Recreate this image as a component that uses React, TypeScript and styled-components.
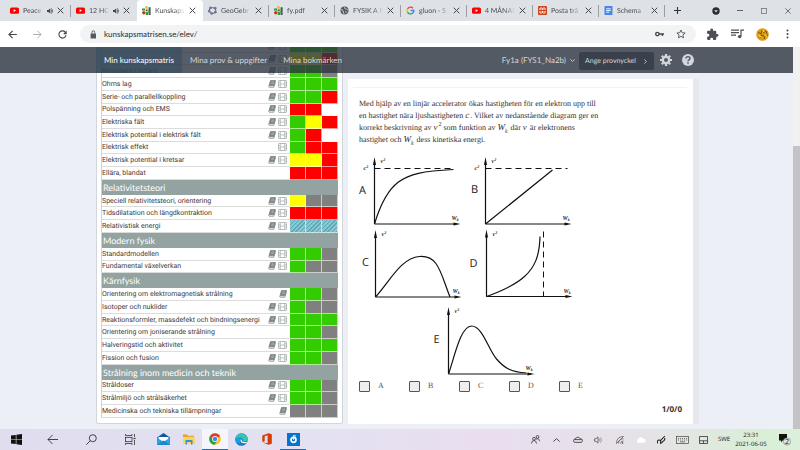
import React from "react";
import styled, { createGlobalStyle, css } from "styled-components";

const Global = createGlobalStyle`
  * { box-sizing: border-box; }
  html, body { margin: 0; height: 100%; }
  body {
    font-family: "Open Sans", "Noto Sans", sans-serif;
    text-rendering: geometricPrecision;
    overflow: hidden;
  }
  button { font: inherit; color: inherit; border: 0; background: none; padding: 0; margin: 0; text-rendering: inherit; }
  input { text-rendering: inherit; }
  svg { display: block; flex: none; }
`;

const Screen = styled.div`
  display: flex;
  flex-direction: column;
  height: 100vh;
  background: #ecf0f6;
`;

/* Browser chrome */

const TabStrip = styled.div`
  display: flex;
  align-items: center;
  height: 21px;
  flex: none;
  padding-left: 5px;
  background: #dee1e6;
`;

const Tab = styled.div<{ $active?: boolean }>`
  display: flex;
  align-items: center;
  gap: 4px;
  flex: 0 1 66px;
  min-width: 0;
  height: 21px;
  padding: 0 7px 0 5px;
  font-family: Lato, sans-serif;
  font-size: 7px;
  line-height: 12px;
  color: #4a4e53;
  border-radius: 4px 4px 0 0;
  background: ${(p) => (p.$active ? "#fff" : "transparent")};
`;

const TabTitle = styled.span`
  flex: 1;
  min-width: 0;
  overflow: hidden;
  white-space: nowrap;
  mask-image: linear-gradient(90deg, #000 65%, transparent 100%);
`;

const TabDivider = styled.span`
  width: 1px;
  height: 12px;
  margin-left: -1px;
  background: #9a9da2;
`;

const NewTab = styled.button`
  width: 24px;
  display: grid;
  place-items: center;
`;

const WindowControls = styled.div`
  display: flex;
  align-items: center;
  margin-left: auto;
`;

const WindowButton = styled.button`
  width: 24px;
  height: 18px;
  display: grid;
  place-items: center;
`;

const Toolbar = styled.div`
  display: flex;
  align-items: center;
  height: 26px;
  flex: none;
  background: #fff;
`;

const ToolButton = styled.button`
  width: 25px;
  height: 20px;
  display: grid;
  place-items: center;
`;

const Omnibox = styled.div`
  display: flex;
  align-items: center;
  gap: 6px;
  flex: 1;
  height: 18px;
  margin: 0 4px 0 5px;
  padding: 0 7px 0 10px;
  border-radius: 9px;
  background: #f1f3f4;
`;

const Address = styled.input`
  flex: 1;
  min-width: 0;
  border: 0;
  padding: 0 0 0 1px;
  background: none;
  font: 8px/14px Lato, sans-serif;
  color: #2c3034;
`;

const OmniButton = styled.button`
  width: 16px;
  display: grid;
  place-items: center;
`;

/* Site */

const Viewport = styled.div`
  position: relative;
  display: flex;
  flex: 1;
  min-height: 0;
  overflow: hidden;
`;

const Page = styled.main`
  display: flex;
  align-items: flex-end;
  gap: 5px;
  flex: 1;
  min-width: 0;
  padding: 0 94px 5px 96px;
`;

const ScrollTrack = styled.div`
  display: flex;
  flex-direction: column;
  justify-content: flex-end;
  width: 7px;
  background: #f1f1f1;
`;

const ScrollThumb = styled.div`
  height: 74%;
  background: #c4c4c6;
`;

const SiteHeader = styled.header`
  position: absolute;
  top: 0;
  left: 0;
  right: 7px;
  display: flex;
  align-items: center;
  height: 26px;
  padding: 0 99px 0 96px;
  background: rgba(45, 53, 64, 0.8);
  color: #d3d6da;
  font-family: Lato, sans-serif;
  font-size: 8px;
  line-height: 12px;
  white-space: nowrap;
`;

const NavLink = styled.a<{ $active?: boolean }>`
  display: flex;
  align-items: center;
  height: 26px;
  padding: 0 8px;
  color: ${(p) => (p.$active ? "#fff" : "#d3d6da")};
  background: ${(p) => (p.$active ? "rgba(52, 78, 98, 0.6)" : "none")};
  text-decoration: none;
`;

const CourseButton = styled.button`
  display: flex;
  align-items: center;
  gap: 4px;
  margin-left: auto;
`;

const KeyButton = styled.button`
  display: flex;
  align-items: center;
  justify-content: space-between;
  width: 75px;
  height: 18px;
  margin: 2px 6px 0 4px;
  padding: 0 7px 0 6px;
  border-radius: 2px;
  background: #3a414d;
  font-size: 7px;
`;

const IconButton = styled.button`
  width: 12px;
  margin-right: 10px;
  &:last-child { margin-right: 0; }
`;

/* Knowledge matrix */

const MatrixPanel = styled.section`
  width: 247px;
  flex: none;
  padding: 0 4px 5px;
  background: #fff;
  border: 1px solid #d2d5d9;
  border-radius: 0 0 2px 2px;
`;

const Matrix = styled.table`
  width: 100%;
  height: 378px;
  border-collapse: separate;
  border-spacing: 0;
  border-left: 1px solid #cfd2d4;
  table-layout: fixed;
  font-family: Roboto, sans-serif;
  font-size: 7px;
  line-height: 10px;
  color: #3c3c3c;
`;

const NameCol = styled.col``;
const IconCol = styled.col`width: 23px;`;
const LevelCol = styled.col`width: 16px;`;

const Topic = styled.th`
  height: 11px;
  padding: 0;
  border-bottom: 1px solid #dcdcdc;
  font-weight: 400;
  text-align: left;
  white-space: nowrap;
`;

const IconCell = styled.td`
  padding: 0 3px 0 0;
  border-bottom: 1px solid #dcdcdc;
`;

const IconPair = styled.div`
  display: flex;
  justify-content: flex-end;
  gap: 2px;
`;

const levelColors: Record<string, string> = {
  g: "#33cc00",
  y: "#ffff00",
  r: "#ff0000",
  x: "#808080",
  w: "#ffffff",
};

const Level = styled.td<{ $level: string }>`
  padding: 0;
  border-right: 1px solid rgba(255, 255, 255, 0.6);
  border-bottom: 1px solid rgba(255, 255, 255, 0.6);
  ${(p) =>
    p.$level === "h"
      ? css`background: repeating-linear-gradient(135deg, #55a9b8 0 1px, #8cc5cf 1px 3px);`
      : css`background: ${levelColors[p.$level]};`}
`;

const SectionHead = styled.th`
  height: 13px;
  padding: 0 1px;
  background: #92a3a1;
  color: #fff;
  font-family: Lato, sans-serif;
  font-size: 9px;
  line-height: 13px;
  font-weight: 400;
  text-align: left;
`;

/* Question */

const QuestionPanel = styled.section`
  flex: 1;
  min-width: 0;
  align-self: stretch;
  display: flex;
  flex-direction: column;
  margin-top: 32px;
  padding: 8px 6px 0 5px;
  border-right: 6px solid #e6e8eb;
  background: #fff;
`;

const Rule = styled.hr`
  width: 100%;
  height: 1px;
  margin: 0;
  border: 0;
  background: #f2f2f2;
`;

const QuestionText = styled.p`
  margin: 10px 0 0;
  padding: 0 6px;
  font: 8px/12px "Liberation Serif", serif;
  color: #333;
  white-space: nowrap;
  i { margin-right: 1px; font-size: 9px; line-height: 0; }
  sup, sub { font-size: 6px; line-height: 0; }
`;

const Diagrams = styled.svg`
  margin: 8px 0 0 2px;
`;

const Options = styled.fieldset`
  display: flex;
  margin: 0;
  padding: 2px 6px 0;
  border: 0;
`;

const Option = styled.label`
  display: flex;
  align-items: center;
  gap: 8px;
  width: 50px;
  font: 8px/12px "Liberation Serif", serif;
  color: #555;
`;

const Check = styled.input`
  appearance: none;
  width: 11px;
  height: 11px;
  margin: 0;
  border: 1px solid #555;
  border-radius: 1px;
  background: #eee;
`;

const Score = styled.div`
  margin: auto 5px 8px auto;
  font-size: 8px;
  line-height: 12px;
  font-weight: 700;
  color: #333;
`;

/* Taskbar */

const Taskbar = styled.footer`
  display: flex;
  height: 21px;
  flex: none;
  background: linear-gradient(90deg, #e0ddee 0%, #e4e1f2 40%, #e9deef 62%, #e5e3e6 82%, #d9efd6 96%, #dcefdb 100%);
`;

const StartGroup = styled.div`
  display: flex;
  width: 150px;
`;

const SystemButton = styled.button`
  flex: 1;
  display: grid;
  place-items: center;
  &:first-child { flex: none; width: 33px; }
`;

const AppButton = styled.button<{ $running?: boolean; $focused?: boolean }>`
  width: 26px;
  display: grid;
  place-items: center;
  border-bottom: 1px solid ${(p) => (p.$running ? "#0f72c4" : "transparent")};
  background: ${(p) => (p.$focused ? "#f6f5fb" : "none")};
`;

const Tray = styled.div`
  display: flex;
  align-items: center;
  margin-left: auto;
  font-size: 6px;
  line-height: 9px;
  color: #111;
`;

const TrayButton = styled.button`
  width: 21px;
  height: 21px;
  display: grid;
  place-items: center;
`;

const Language = styled.button`
  width: 20px;
`;

const Clock = styled.div`
  width: 34px;
  text-align: center;
  white-space: nowrap;
`;

const Notifications = styled.button`
  width: 32px;
  display: grid;
  place-items: center;
`;

/* Icons */

type GlyphProps = { w: number; h?: number; box?: string; children: React.ReactNode };

const Glyph = ({ w, h = w, box = "0 0 24 24", children }: GlyphProps) => (
  <svg width={w} height={h} viewBox={box} fill="none" stroke="currentColor" strokeWidth="2" aria-hidden="true">
    {children}
  </svg>
);

const Close = () => (
  <Glyph w={7} box="0 0 7 7">
    <path d="M.7.7l5.6 5.6M6.3.7L.7 6.3" stroke="#44474b" strokeWidth="1" />
  </Glyph>
);

const Favicon = ({ kind }: { kind: string }) => {
  switch (kind) {
    case "youtube":
      return (
        <Glyph w={9} box="0 0 9 9">
          <rect y="1.4" width="9" height="6.4" rx="1.6" fill="#f00" stroke="none" />
          <path d="M3.6 3.2v2.8L6 4.6z" fill="#fff" stroke="none" />
        </Glyph>
      );
    case "matrix":
      return (
        <Glyph w={9} box="0 0 9 9">
          <g stroke="none">
            <circle cx="1.8" cy="6.8" r="1.7" fill="#e02b20" />
            <path d="M3.3.3h2.4v2.4H3.3z" fill="#e8b900" />
            <path d="M0 2.5h3v2H0zM3.8 6h2.2v3H3.8z" fill="#2c9b30" />
            <path d="M6.6 1.3h2V9h-2zM3.7 3.6h2v1.7h-2z" fill="#4b5055" />
            <path d="M6.4 4.2h1v3h-1z" fill="#2fb52f" />
          </g>
        </Glyph>
      );
    case "geogebra":
      return (
        <Glyph w={9} box="0 0 9 9">
          <ellipse cx="4.5" cy="4.5" rx="3.3" ry="2.9" stroke="#666" strokeWidth="1" />
          <g fill="#7777c8" stroke="#445" strokeWidth=".3">
            <circle cx="2.5" cy="1.8" r="1.1" /><circle cx="7.3" cy="2.2" r="1.1" />
            <circle cx="1.2" cy="5.2" r="1.1" /><circle cx="3.7" cy="7.5" r="1.1" /><circle cx="7.4" cy="6.2" r="1.1" />
          </g>
        </Glyph>
      );
    case "globe":
      return (
        <Glyph w={9} box="0 0 9 9">
          <circle cx="4.5" cy="4.5" r="4" fill="#55595e" stroke="none" />
          <path d="M1 3.5c1.6.4 2.6 1.3 2.2 2.3L4 7.8M4.6 1.2c-.6 1 .4 1.6 1.2 1.5s.7 1.3 2 1.2M5.2 5.7l1.6.6" stroke="#dee1e6" strokeWidth=".9" />
        </Glyph>
      );
    case "google":
      return (
        <Glyph w={9} box="0 0 9 9">
          <g strokeWidth="1.4">
            <path d="M7 2.2A3.4 3.4 0 0 0 1.5 2.9" stroke="#ea4335" />
            <path d="M1.5 2.9a3.4 3.4 0 0 0 0 3.2" stroke="#fbbc05" />
            <path d="M1.5 6.1A3.4 3.4 0 0 0 6.8 7" stroke="#34a853" />
            <path d="M6.8 7a3.4 3.4 0 0 0 1.1-2.5H4.6" stroke="#4285f4" />
          </g>
        </Glyph>
      );
    case "fandom":
      return (
        <Glyph w={9} box="0 0 9 9">
          <rect width="9" height="9" rx="1" fill="#cf4520" stroke="none" />
          <path d="M1 3h2.8M5.2 3H8M1 6h2.8M5.2 6H8M4.5 2.2v1.6M4.5 5.2v1.6M3 1.2v1M6 1.2v1M3 6.8v1M6 6.8v1" stroke="#fff" strokeWidth="1" />
        </Glyph>
      );
    default:
      return (
        <Glyph w={9} box="0 0 9 9">
          <rect x=".5" width="8" height="9" rx=".8" fill="#4285f4" stroke="none" />
          <path d="M2.2 2.8h4.6M2.2 4.5h4.6M2.2 6.2h3" stroke="#fff" strokeWidth=".9" />
        </Glyph>
      );
  }
};

const SpeakerSmall = () => (
  <Glyph w={6} box="0 0 6 6">
    <path d="M0 2h1.3L3.2.4v5.2L1.3 4H0z" fill="#44474b" stroke="none" />
    <path d="M4 1.6q1.2 1.4 0 2.8M4.4.3q2.6 2.7 0 5.4" stroke="#44474b" strokeWidth=".7" />
  </Glyph>
);

const Book = () => (
  <Glyph w={8} box="0 0 8 8">
    <path d="M2.5.5h5L6 5.8H1z" fill="#7b8684" stroke="#7b8684" strokeWidth=".8" strokeLinejoin="round" />
    <path d="M1 5.8q-.8 1.4.3 1.5h4.5L7.4 1.8" stroke="#7b8684" strokeWidth=".7" />
    <path d="M3.5 2h2.6M3.1 3.3h2.6" stroke="#d6dcda" strokeWidth=".5" />
  </Glyph>
);

const Film = () => (
  <Glyph w={9} h={8} box="0 0 9 8">
    <rect x=".5" y=".5" width="8" height="7" rx=".6" stroke="#a3abaa" strokeWidth=".8" />
    <path d="M2.3.5v7M6.7.5v7M.5 2.8h1.8M.5 5.2h1.8M6.7 2.8h1.8M6.7 5.2h1.8M2.3 4h4.4" stroke="#a3abaa" strokeWidth=".7" />
  </Glyph>
);

/* Data */

type TabInfo = { icon: string; title: string; sound?: boolean; active?: boolean; plain?: boolean };

const tabs: TabInfo[] = [
  { icon: "youtube", title: "Peace", sound: true },
  { icon: "youtube", title: "12 HO", sound: true, plain: true },
  { icon: "matrix", title: "Kunskaps", active: true, plain: true },
  { icon: "geogebra", title: "GeoGebr" },
  { icon: "matrix", title: "fy.pdf" },
  { icon: "globe", title: "FYSIK A F" },
  { icon: "google", title: "gluon - S" },
  { icon: "youtube", title: "4 MÅNAD" },
  { icon: "fandom", title: "Posta trå" },
  { icon: "docs", title: "Schema" },
];

type Row = { name: string; icons: string; levels: string };
type Section = { title?: string; rows: Row[] };

const sections: Section[] = [
  {
    rows: [
      { name: "", icons: "bf", levels: "ggg" },
      { name: "", icons: "bf", levels: "yyr" },
      { name: "Resistans i ledare", icons: "bf", levels: "ggx" },
      { name: "Ohms lag", icons: "bf", levels: "ggg" },
      { name: "Serie- och parallellkoppling", icons: "bf", levels: "ggr" },
      { name: "Polspänning och EMS", icons: "bf", levels: "rrw" },
      { name: "Elektriska fält", icons: "bf", levels: "gyr" },
      { name: "Elektrisk potential i elektrisk fält", icons: "bf", levels: "grw" },
      { name: "Elektrisk effekt", icons: "f", levels: "grr" },
      { name: "Elektrisk potential i kretsar", icons: "bf", levels: "yyr" },
      { name: "Ellära, blandat", icons: "", levels: "rrr" },
    ],
  },
  {
    title: "Relativitetsteori",
    rows: [
      { name: "Speciell relativitetsteori, orientering", icons: "bf", levels: "yxx" },
      { name: "Tidsdilatation och längdkontraktion", icons: "bf", levels: "rrr" },
      { name: "Relativistisk energi", icons: "bf", levels: "hhh" },
    ],
  },
  {
    title: "Modern fysik",
    rows: [
      { name: "Standardmodellen", icons: "bf", levels: "ggx" },
      { name: "Fundamental växelverkan", icons: "bf", levels: "gxx" },
    ],
  },
  {
    title: "Kärnfysik",
    rows: [
      { name: "Orientering om elektromagnetisk strålning", icons: "b", levels: "ggx" },
      { name: "Isotoper och nuklider", icons: "bf", levels: "gxx" },
      { name: "Reaktionsformler, massdefekt och bindningsenergi", icons: "bf", levels: "ggg" },
      { name: "Orientering om joniserande strålning", icons: "", levels: "ggx" },
      { name: "Halveringstid och aktivitet", icons: "bf", levels: "ggg" },
      { name: "Fission och fusion", icons: "bf", levels: "ggx" },
    ],
  },
  {
    title: "Strålning inom medicin och teknik",
    rows: [
      { name: "Stråldoser", icons: "bf", levels: "ggx" },
      { name: "Strålmiljö och strålsäkerhet", icons: "bf", levels: "ggx" },
      { name: "Medicinska och tekniska tillämpningar", icons: "b", levels: "xxx" },
    ],
  },
];

/* Diagrams: each plot is drawn around its own origin. */

type PlotProps = { x: number; y: number; letter: string; lx: number; ly: number; limit?: boolean; children: React.ReactNode };

const Plot = ({ x, y, letter, lx, ly, limit, children }: PlotProps) => (
  <g transform={`translate(${x} ${y})`}>
    <path d="M0 0V-62M0 0H82" strokeWidth="1.2" />
    <path d="M0-67l1.5 8h-3zM86 0l-7 1.5v-3z" fill="#111" stroke="none" />
    <g fill="#222" stroke="none" fontFamily="Liberation Serif" fontStyle="italic" fontWeight="700">
      <text x="6" y="-61" fontSize="6">v<tspan dy="-2" fontSize="4">2</tspan></text>
      <text x="77" y="-4" fontSize="6">W<tspan dy="1" fontSize="4">k</tspan></text>
      {limit && <text x="-11" y="-54" fontSize="6">c<tspan dy="-2" fontSize="4">2</tspan></text>}
    </g>
    <text x={lx} y={ly} fill="#222" stroke="none" fontFamily="Open Sans" fontSize="11" textAnchor="middle">{letter}</text>
    {children}
  </g>
);

export default function App() {
  return (
    <Screen>
      <Global />
      <TabStrip>
        {tabs.map((t, i) => (
          <React.Fragment key={i}>
            <Tab $active={t.active}>
              <Favicon kind={t.icon} />
              <TabTitle>{t.title}</TabTitle>
              {t.sound && <SpeakerSmall />}
              <button aria-label="Stäng flik"><Close /></button>
            </Tab>
            {!t.plain && <TabDivider />}
          </React.Fragment>
        ))}
        <NewTab aria-label="Ny flik">
          <Glyph w={7} box="0 0 7 7"><path d="M3.5 0v7M0 3.5h7" stroke="#333" strokeWidth="1.1" /></Glyph>
        </NewTab>
        <WindowControls>
          <WindowButton aria-label="Sök flikar">
            <Glyph w={8} box="0 0 8 8"><circle cx="4" cy="4" r="3.7" fill="#2b2d30" stroke="none" /><path d="M2.2 3.2h3.6L4 5.5z" fill="#dee1e6" stroke="none" /></Glyph>
          </WindowButton>
          <WindowButton aria-label="Minimera"><Glyph w={6} box="0 0 6 6"><path d="M0 2.5h6" stroke="#555" strokeWidth=".9" /></Glyph></WindowButton>
          <WindowButton aria-label="Maximera"><Glyph w={6} box="0 0 6 6"><rect x=".5" y=".5" width="5" height="5" stroke="#666" strokeWidth=".7" /></Glyph></WindowButton>
          <WindowButton aria-label="Stäng"><Glyph w={6} box="0 0 6 6"><path d="M.4.4l5.2 5.2M5.6.4L.4 5.6" stroke="#555" strokeWidth=".8" /></Glyph></WindowButton>
        </WindowControls>
      </TabStrip>

      <Toolbar>
        <ToolButton aria-label="Bakåt"><Glyph w={9} box="0 0 9 9"><path d="M8.8 4.5H1M4.6.8L.9 4.5l3.7 3.7" stroke="#44474b" strokeWidth="1.1" /></Glyph></ToolButton>
        <ToolButton aria-label="Framåt"><Glyph w={9} box="0 0 9 9"><path d="M.2 4.5H8M4.4.8l3.7 3.7-3.7 3.7" stroke="#a8abb0" strokeWidth="1" /></Glyph></ToolButton>
        <ToolButton aria-label="Ladda om"><Glyph w={9} box="0 0 9 9"><path d="M7.6 2.6A3.6 3.6 0 1 0 8 5.4" stroke="#44474b" strokeWidth="1.1" /><path d="M8.7.6v3.6H5.1z" fill="#44474b" stroke="none" /></Glyph></ToolButton>
        <Omnibox>
          <Glyph w={7} h={9} box="0 0 7 9"><rect x=".6" y="3.4" width="5.4" height="5" rx=".5" fill="#55595e" stroke="none" /><path d="M1.9 3.6V2.2a1.4 1.4 0 0 1 2.8 0v1.4" stroke="#55595e" strokeWidth=".9" /></Glyph>
          <Address aria-label="Adress" defaultValue="kunskapsmatrisen.se/elev/" />
          <OmniButton aria-label="Lösenord"><Glyph w={9} h={6} box="0 0 9 6"><circle cx="2.4" cy="3" r="1.7" stroke="#44474b" strokeWidth="1.3" /><path d="M4 3h5M7.4 3v2" stroke="#44474b" strokeWidth="1.3" /></Glyph></OmniButton>
          <OmniButton aria-label="Bokmärke"><Glyph w={10}><path d="M12 2.5l2.9 6.4 7 .7-5.3 4.7 1.5 6.9L12 17.6 5.9 21.2l1.5-6.9L2.1 9.6l7-.7z" stroke="#44474b" /></Glyph></OmniButton>
        </Omnibox>
        <ToolButton aria-label="Tillägg">
          <Glyph w={13}><path d="M20.5 11H19V7a2 2 0 0 0-2-2h-4V3.5a2.5 2.5 0 0 0-5 0V5H4a2 2 0 0 0-2 2v3.8h1.5a2.7 2.7 0 0 1 0 5.4H2V20a2 2 0 0 0 2 2h3.8v-1.5a2.7 2.7 0 0 1 5.4 0V22H17a2 2 0 0 0 2-2v-4h1.5a2.5 2.5 0 0 0 0-5z" fill="#4c4f53" stroke="none" /></Glyph>
        </ToolButton>
        <ToolButton aria-label="Media">
          <Glyph w={13} h={10} box="0 0 13 10"><path d="M0 1.2h8M0 3.7h8M0 6.2h5M10 7.5V1.2h3" stroke="#4c4f53" strokeWidth="1.2" /><circle cx="8.6" cy="7.6" r="1.7" fill="#4c4f53" stroke="none" /></Glyph>
        </ToolButton>
        <ToolButton aria-label="Profil">
          <Glyph w={13} box="0 0 13 13">
            <circle cx="6.5" cy="6.5" r="6.3" fill="#dc9d18" stroke="none" />
            <path d="M2 4l3 2 1-4M4 10l1-3 3 1M7 5l3-2 1 3M8 11l1-3 3-1" stroke="#7d5208" strokeWidth="1" />
            <path d="M3 7l2 2M7 2l1 2M9 7l2 2" stroke="#f6d43c" strokeWidth="1.3" />
          </Glyph>
        </ToolButton>
        <ToolButton aria-label="Meny">
          <Glyph w={3} h={10} box="0 0 3 10"><g fill="#44474b" stroke="none"><circle cx="1.5" cy="1.5" r="1" /><circle cx="1.5" cy="5" r="1" /><circle cx="1.5" cy="8.5" r="1" /></g></Glyph>
        </ToolButton>
      </Toolbar>

      <Viewport>
        <Page>
          <MatrixPanel>
            <Matrix>
              <colgroup><NameCol /><IconCol /><LevelCol /><LevelCol /><LevelCol /></colgroup>
              <tbody>
                {sections.map((s, si) => (
                  <React.Fragment key={si}>
                    {s.title && <tr><SectionHead colSpan={5}>{s.title}</SectionHead></tr>}
                    {s.rows.map((r, ri) => (
                      <tr key={ri}>
                        <Topic scope="row">{r.name}</Topic>
                        <IconCell><IconPair>{r.icons.includes("b") && <Book />}{r.icons.includes("f") && <Film />}</IconPair></IconCell>
                        {r.levels.split("").map((l, li) => <Level key={li} $level={l} />)}
                      </tr>
                    ))}
                  </React.Fragment>
                ))}
              </tbody>
            </Matrix>
          </MatrixPanel>

          <QuestionPanel>
            <Rule />
            <QuestionText>
              Med hjälp av en linjär accelerator ökas hastigheten för en elektron upp till<br />
              en hastighet nära ljushastigheten <i>c</i>. Vilket av nedanstående diagram ger en<br />
              korrekt beskrivning av <i>v</i><sup>2</sup> som funktion av <i>W<sub>k</sub></i> där <i>v</i> är elektronens<br />
              hastighet och <i>W<sub>k</sub></i> dess kinetiska energi.
            </QuestionText>
            <Diagrams width="222" height="224" viewBox="355 154 222 224" fill="none" stroke="#111" role="img" aria-label="Diagram A till E">
              <Plot x={374.5} y={224} letter="A" lx={-12} ly={-30} limit>
                <path d="M0-55.5H79" strokeDasharray="6 4" />
                <path d="M0 0C6-20 13-34 24-42S48-53 79-54.5" strokeWidth="1.2" />
              </Plot>
              <Plot x={485.5} y={224} letter="B" lx={-11} ly={-31} limit>
                <path d="M0-55.5H82" strokeDasharray="6 4" />
                <path d="M0 0L67-54" strokeWidth="1.2" />
              </Plot>
              <Plot x={375.5} y={297} letter="C" lx={-10} ly={-31}>
                <path d="M0 0C14-15 25-39 44-40.5S65-24 74.5 0" strokeWidth="1.2" />
              </Plot>
              <Plot x={486.5} y={296.5} letter="D" lx={-13} ly={-30}>
                <path d="M57-65V0" strokeDasharray="6 4" />
                <path d="M0 0C14-5 28-11 38-20S53-40 53.5-60" strokeWidth="1.2" />
              </Plot>
              <Plot x={448.5} y={374} letter="E" lx={-12} ly={-31}>
                <path d="M0 0C6-17 12-48 23-48S40-24 48-15 62-2 78-1" strokeWidth="1.2" />
              </Plot>
            </Diagrams>
            <Options aria-label="Svarsalternativ">
              {["A", "B", "C", "D", "E"].map((o) => (
                <Option key={o}><Check type="checkbox" />{o}</Option>
              ))}
            </Options>
            <Score>1/0/0</Score>
          </QuestionPanel>
        </Page>
        <ScrollTrack><ScrollThumb /></ScrollTrack>

        <SiteHeader>
          <NavLink href="#matris" $active>Min kunskapsmatris</NavLink>
          <NavLink href="#prov">Mina prov &amp; uppgifter</NavLink>
          <NavLink href="#bokmarken">Mina bokmärken</NavLink>
          <CourseButton>Fy1a (FYS1_Na2b)<Glyph w={5} h={3} box="0 0 5 3"><path d="M.4.4l2.1 2 2.1-2" strokeWidth=".9" /></Glyph></CourseButton>
          <KeyButton>Ange provnyckel<Glyph w={3} h={5} box="0 0 3 5"><path d="M.4.4l2 2.1-2 2.1" strokeWidth=".8" /></Glyph></KeyButton>
          <IconButton aria-label="Inställningar">
            <Glyph w={12} box="0 0 12 12"><circle cx="6" cy="6" r="3.2" strokeWidth="2.4" /><path d="M6 0v2M6 10v2M0 6h2M10 6h2M1.8 1.8l1.4 1.4M8.8 8.8l1.4 1.4M1.8 10.2l1.4-1.4M8.8 3.2l1.4-1.4" strokeWidth="2.2" /></Glyph>
          </IconButton>
          <IconButton aria-label="Hjälp">
            <Glyph w={12} box="0 0 12 12"><circle cx="6" cy="6" r="6" fill="currentColor" stroke="none" /><path d="M4 4.6C4 2 8 2 8 4.4 8 5.8 6 5.8 6 7.3M6 8.3v1.5" stroke="#4d545e" strokeWidth="1.4" /></Glyph>
          </IconButton>
        </SiteHeader>
      </Viewport>

      <Taskbar>
        <StartGroup>
          <SystemButton aria-label="Start"><Glyph w={11} box="0 0 11 11"><path d="M0 1.6l4.8-.7v4.3H0zM5.4.8L11 0v5.2H5.4zM0 5.8h4.8v4.3L0 9.4zM5.4 5.8H11V11l-5.6-.8z" fill="#111" stroke="none" /></Glyph></SystemButton>
          <SystemButton aria-label="Tillbaka"><Glyph w={11} box="0 0 11 11"><path d="M11 5.5H1M5.5 1L1 5.5 5.5 10" stroke="#333" strokeWidth=".9" /></Glyph></SystemButton>
          <SystemButton aria-label="Sök"><Glyph w={11} box="0 0 11 11"><circle cx="6.8" cy="4.2" r="3.5" stroke="#333" strokeWidth=".9" /><path d="M4.3 6.7L.3 10.7" stroke="#333" strokeWidth=".9" /></Glyph></SystemButton>
          <SystemButton aria-label="Aktivitetsvyn"><Glyph w={11} box="0 0 11 11"><path d="M.5 0v1.5h6.5V0M.5 11V9.5h6.5V11M9.5 0v3M9.5 6v5" stroke="#333" strokeWidth=".8" /><rect x=".5" y="3.3" width="6.5" height="4.4" stroke="#333" strokeWidth=".8" /><path d="M8.5 4.5h2" stroke="#333" strokeWidth="1.2" /></Glyph></SystemButton>
        </StartGroup>
        <AppButton aria-label="E-post"><Glyph w={13} h={12} box="0 0 13 12"><g stroke="none"><path d="M0 4.5L6.5 0 13 4.5V12H0z" fill="#0a5c9e" /><path d="M1.5 4h10v4h-10z" fill="#fff" /><path d="M0 4.8l6.5 4L13 4.8V12H0z" fill="#29a3e4" /><path d="M0 12l6.5-4.5L13 12z" fill="#1b87d0" /></g></Glyph></AppButton>
        <AppButton aria-label="Utforskaren"><Glyph w={12} h={11} box="0 0 12 11"><g stroke="none"><path d="M0 .5h4l1 1.2h6v2H0z" fill="#e0a126" /><path d="M0 2.8h12V10H0z" fill="#fcd462" /><path d="M2.5 6h7v4.5H8V8H4v2.5H2.5z" fill="#3d8fd0" /></g></Glyph></AppButton>
        <AppButton aria-label="Chrome" $running $focused><Glyph w={12} box="0 0 12 12"><g stroke="none"><circle cx="6" cy="6" r="5.8" fill="#fbc116" /><path d="M6 6L.9 3.2A5.8 5.8 0 0 1 11.1 3.3z" fill="#e33b2e" /><path d="M6 6L.9 3.2A5.8 5.8 0 0 0 5.7 11.8l2.6-4.5z" fill="#269f4c" /><circle cx="6" cy="6" r="2.9" fill="#fff" /><circle cx="6" cy="6" r="2.2" fill="#4285f4" /></g></Glyph></AppButton>
        <AppButton aria-label="Edge"><Glyph w={13} box="0 0 13 13"><g stroke="none"><circle cx="6.5" cy="6.5" r="6.3" fill="#1479c9" /><path d="M.3 6A6.3 6.3 0 0 1 12.8 6.5C12.5 9 8.5 9.2 7.8 8 9.5 5.5 5 2.5.3 6z" fill="#38c6a6" /><path d="M.3 6.5C3 3 7 4 7.2 6 5.5 5.5 4 8 5.5 10.5 2.5 10.5.5 9 .3 6.5z" fill="#1b9de2" /><path d="M5.8 6.5C4.5 9 8 11.5 11.5 9.8L12.5 9H9C7 8.9 6.7 8 7.2 6.8z" fill="#eceaf5" /></g></Glyph></AppButton>
        <AppButton aria-label="Office"><Glyph w={10} h={12} box="0 0 10 12"><path d="M6.5.2L9.8 1.2v9.6l-3.3 1L.6 9.6l5 .6V2.3L2.7 3.2v5L.3 9.1V2.5z" fill="#d83b01" stroke="none" /></Glyph></AppButton>
        <AppButton aria-label="Groove-musik" $running><Glyph w={13} box="0 0 13 13"><rect width="13" height="13" fill="#0873cb" stroke="none" /><circle cx="6.5" cy="6.8" r="2.5" stroke="#fff" strokeWidth="1.7" /><path d="M6.5 6.8V2.5L9 3" stroke="#fff" strokeWidth=".9" /></Glyph></AppButton>

        <Tray>
          <TrayButton aria-label="Kontakter"><Glyph w={9} box="0 0 9 9"><g stroke="#333" strokeWidth=".8"><circle cx="3" cy="3.8" r="1.4" /><path d="M.5 8.5q.2-3 2.5-3t2.5 3" /><circle cx="6.5" cy="1.9" r="1.4" /><path d="M5 4.2q3.2-1.5 3.5 2" /></g></Glyph></TrayButton>
          <TrayButton aria-label="Visa dolda ikoner"><Glyph w={7} h={4} box="0 0 7 4"><path d="M.4 3.6L3.5.6l3.1 3" stroke="#333" strokeWidth=".9" /></Glyph></TrayButton>
          <TrayButton aria-label="OneDrive"><Glyph w={10} h={7} box="0 0 10 7"><path d="M2.2 6.4a1.7 1.7 0 0 1 .1-3.4 2.7 2.7 0 0 1 5-.2 1.8 1.8 0 0 1 .6 3.6zM1.5 3.6h7" stroke="#444" strokeWidth=".9" /></Glyph></TrayButton>
          <TrayButton aria-label="Volym"><Glyph w={9} h={8} box="0 0 9 8"><path d="M.4 2.8h1.5L4 .9v6.2L1.9 5.2H.4z" stroke="#444" strokeWidth=".7" /><path d="M5.3 2.6q1 1.4 0 2.8M6.5 1.5q2 2.5 0 5" stroke="#777" strokeWidth=".7" /></Glyph></TrayButton>
          <TrayButton aria-label="Nätverk"><Glyph w={8} box="0 0 8 8"><path d="M.5 7.5Q.5.5 7.5.5M2.5 7.5Q2.5 2.8 7.5 2.8M4.5 7.5Q4.5 5 7.5 5M.5 7.5L7.5.5" stroke="#555" strokeWidth=".7" /><circle cx="6.5" cy="7" r=".8" fill="#333" stroke="none" /></Glyph></TrayButton>
          <TrayButton aria-label="Moln"><Glyph w={10} h={7} box="0 0 10 7"><path d="M2.2 6.8a2 2 0 0 1 .1-3.8 2.7 2.7 0 0 1 5-.2 2 2 0 0 1 .6 4z" fill="#fff" stroke="none" /></Glyph></TrayButton>
          <TrayButton aria-label="Windows Ink"><Glyph w={9} box="0 0 9 9"><path d="M.6 8.4Q-.2 5 2 5T3.6 7.4 6.5 6M3 6.2L7.8 1M5 7Q8.8 5 7.5 3" stroke="#222" strokeWidth="1.1" /></Glyph></TrayButton>
          <TrayButton aria-label="Tangentbord"><Glyph w={13} h={8} box="0 0 13 8"><rect x=".5" y=".5" width="12" height="7" stroke="#444" strokeWidth=".7" /><path d="M2 2.5h9M2 4h9" stroke="#555" strokeWidth=".8" strokeDasharray="1 1" /><path d="M4 5.8h5" stroke="#555" strokeWidth=".8" /></Glyph></TrayButton>
          <TrayButton aria-label="Pekplatta"><Glyph w={9} h={8} box="0 0 9 8"><path d="M.5.5h8v7h-8zM.5 4.8h8M4.5 4.8v2.7" stroke="#333" strokeWidth=".8" /></Glyph></TrayButton>
          <Language>SWE</Language>
          <Clock>23:31<br />2021-06-05</Clock>
          <Notifications aria-label="2 aviseringar">
            <svg width="13" height="13" viewBox="0 0 13 13">
              <path d="M1 1h8v6.5H4.5L3 9.5v-2H1z" fill="#111" />
              <circle cx="9" cy="8.5" r="3.6" fill="#dfe6df" stroke="#777" strokeWidth=".6" />
              <text x="9" y="11" fontSize="7" fontFamily="Open Sans" textAnchor="middle" fill="#222">2</text>
            </svg>
          </Notifications>
        </Tray>
      </Taskbar>
    </Screen>
  );
}
